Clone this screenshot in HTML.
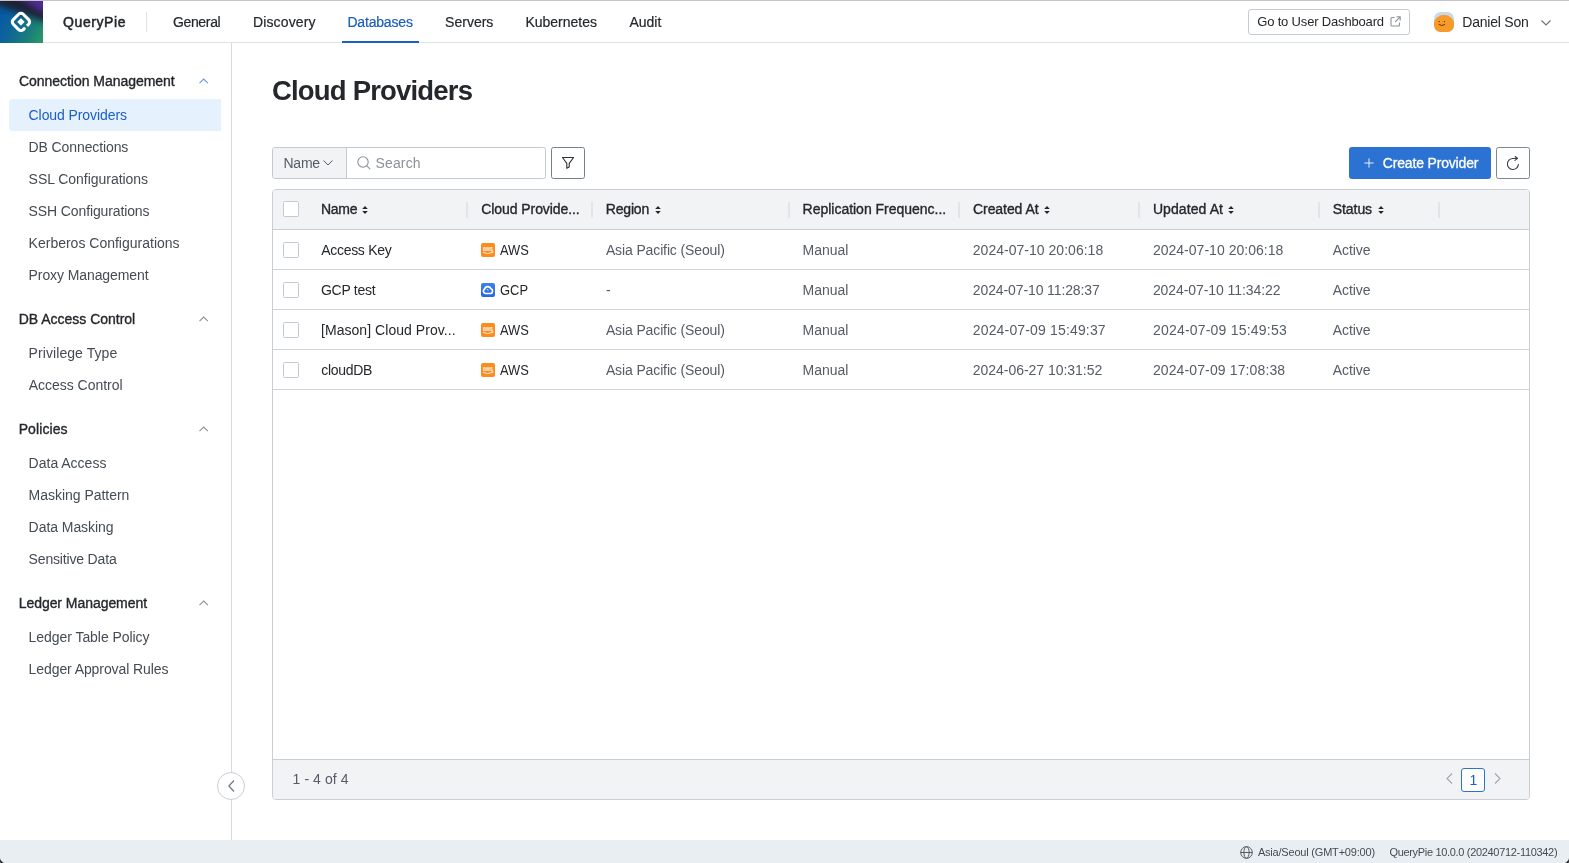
<!DOCTYPE html>
<html lang="en"><head><meta charset="utf-8"><title>Cloud Providers - QueryPie</title>
<style>
*{box-sizing:border-box;margin:0;padding:0}
html,body{width:1569px;height:863px;overflow:hidden;background:#fff}
body{font-family:"Liberation Sans",sans-serif;position:relative;color:#24272b}
.a{position:absolute}
.t{position:absolute;white-space:nowrap;display:block}
.t.sh,.t.th{-webkit-text-stroke:0.35px currentColor}
.t.cp{-webkit-text-stroke:0.3px #fff}
.t.qp{-webkit-text-stroke:0.5px currentColor}
.t.nv{-webkit-text-stroke:0.2px currentColor}
#texts{position:absolute;left:0;top:0;width:1569px;height:863px;will-change:transform}
svg{position:absolute;overflow:visible}
#topline{left:0;top:0;width:1569px;height:1px;background:#c4c4c4}
#hdr{left:0;top:1px;width:1569px;height:42px;border-bottom:1px solid #dde3e9;background:#fff}
#logo{left:0;top:1px;width:43px;height:42px;overflow:hidden;background:#0b5c9c}
#hdiv{left:146px;top:12px;width:1px;height:20px;background:#dfe3e8}
#navul{left:342px;top:41px;width:77px;height:2px;background:#1b5fc4}
#dashbtn{left:1248px;top:9px;width:162px;height:26px;border:1px solid #c5cad3;border-radius:3px;background:#fff}
#side{left:0;top:43px;width:232px;height:797px;border-right:1px solid #d8dce2;background:#fff}
#sel{left:9px;top:99px;width:212px;height:32px;background:#e5f1fd;border-radius:4px 0 0 4px}
#colbtn{left:217px;top:772px;width:28px;height:28px;border-radius:50%;border:1px solid #c9ced4;background:#fff}
#foot{left:0;top:840px;width:1569px;height:23px;background:#e9eef2}
#sgrp{left:272px;top:147px;width:274px;height:32px;border:1px solid #c5cad0;border-radius:2.500px;background:#fff;overflow:hidden}
#sname{left:0;top:0;width:74px;height:30px;background:#f1f3f5;border-right:1px solid #c5cad0}
#fbtn{left:551px;top:147px;width:34px;height:32px;border:1px solid #77818b;border-radius:2.500px;background:#fff}
#cbtn{left:1349px;top:147px;width:142px;height:32px;border-radius:3px;background:#2b72d2}
#rbtn{left:1496px;top:147px;width:34px;height:32px;border:1px solid #7f8891;border-radius:2.500px;background:#fff}
#tbl{left:272px;top:189px;width:1258px;height:611px;border:1px solid #c9ced4;border-radius:4px;background:#fff;overflow:hidden}
#thead{left:0;top:0;width:1256px;height:40px;background:#f1f3f5;border-bottom:1px solid #c9ced4}
.rl{left:0;width:1256px;height:1px;background:#d0d4da}
#tfoot{left:0;top:569px;width:1256px;height:40px;background:#f1f3f5;border-top:1px solid #c9ced4}
.cb{width:16px;height:16px;border:1px solid #c6c9d1;border-radius:1.500px;background:#fff;left:283px}
.cd{width:2px;height:16px;background:#e1e4e8;top:202px}
.ic{width:14px;height:14px;border-radius:2.5px;left:481px}
.aws{background:#f68d2a}
.gcp{background:#3b7eee}
#pg{left:1461px;top:768px;width:24px;height:24px;border:1px solid #2b72d2;border-radius:3px;background:#fff}

</style></head>
<body>
<div class="a" id="hdr"></div>
<div class="a" id="topline"></div>
<div class="a" id="logo">
<svg width="43" height="42" viewBox="0 0 43 42" style="left:0;top:0">
<defs>
<linearGradient id="lgb" x1="0" y1="0.35" x2="1" y2="0.85"><stop offset="0" stop-color="#0759a3"/><stop offset="0.3" stop-color="#0d6499"/><stop offset="0.5" stop-color="#146f8b"/><stop offset="0.75" stop-color="#1c8078"/><stop offset="1" stop-color="#279768"/></linearGradient>
<filter id="lbl" x="-50%" y="-50%" width="200%" height="200%"><feGaussianBlur stdDeviation="3.6"/></filter>
<filter id="lbl2" x="-50%" y="-50%" width="200%" height="200%"><feGaussianBlur stdDeviation="3"/></filter>
</defs>
<rect width="43" height="42" fill="url(#lgb)"/>
<g filter="url(#lbl)">
<polygon points="-12,-12 60,-12 60,26 34,17 -12,1" fill="#1b2036"/>
</g>
<g filter="url(#lbl2)">
<polygon points="10,-9 56,-9 56,15 38,9 " fill="#502a92"/>
</g>
<g transform="translate(20.950,20.900) rotate(45)">
<path d="M 7.050 -1.500 L 7.050 -3.750 A 3.300 3.300 0 0 0 3.750 -7.050 L -3.750 -7.050 A 3.300 3.300 0 0 0 -7.050 -3.750 L -7.050 3.750 A 3.300 3.300 0 0 0 -3.750 7.050 L 3.750 7.050 A 3.300 3.300 0 0 0 7.050 3.750 L 7.050 2.400" fill="none" stroke="#fff" stroke-width="3.100"/>
<circle cx="7.050" cy="2.400" r="1.550" fill="#fff"/>
<rect x="-2.650" y="-2.650" width="5.300" height="5.300" rx="0.500" fill="#fff"/>
</g>
</svg>
</div>
<div class="a" id="hdiv"></div>
<div class="a" id="navul"></div>
<div class="a" id="dashbtn"></div>
<svg width="11" height="11" viewBox="0 0 11 11" style="left:1390px;top:16px" fill="none" stroke="#8a919a" stroke-width="1.1">
<path d="M4.5 1.5 H2 A1 1 0 0 0 1 2.5 V9 A1 1 0 0 0 2 10 H8.5 A1 1 0 0 0 9.5 9 V6.5"/>
<path d="M6.5 0.8 H10.2 V4.5 M10.2 0.8 L5.2 5.8"/>
</svg>
<!-- avatar -->
<svg width="20" height="20" viewBox="0 0 20 20" style="left:1434px;top:12px">
<defs><clipPath id="avc"><rect x="0" y="0" width="20" height="20" rx="6.5"/></clipPath></defs>
<g clip-path="url(#avc)">
<rect width="20" height="20" fill="#c9d9ea"/>
<circle cx="10" cy="13" r="10.3" fill="#f89a28"/>
<circle cx="5.300" cy="9.600" r="0.700" fill="#4a3210"/>
<circle cx="10.400" cy="9.600" r="0.700" fill="#4a3210"/>
<path d="M5 12.600 Q7.850 14.700 10.700 12.600" fill="none" stroke="#4a3210" stroke-width="0.9" stroke-linecap="round"/>
</g>
</svg>
<svg width="10" height="6" viewBox="0 0 10 6" style="left:1541px;top:19.500px" fill="none" stroke="#6a717a" stroke-width="1.1"><path d="M0.5 0.5 L5 5 L9.500 0.5"/></svg>

<div class="a" id="side"></div>
<div class="a" id="sel"></div>
<svg width="10" height="6" viewBox="0 0 10 6" style="left:199px;top:77.6px" fill="none" stroke="#6a9ae2" stroke-width="1.1"><path d="M0.5 5.200 L4.700 1 L8.900 5.200"/></svg>
<svg width="10" height="6" viewBox="0 0 10 6" style="left:199px;top:315.6px" fill="none" stroke="#8a9097" stroke-width="1.1"><path d="M0.5 5.200 L4.700 1 L8.900 5.200"/></svg>
<svg width="10" height="6" viewBox="0 0 10 6" style="left:199px;top:425.6px" fill="none" stroke="#8a9097" stroke-width="1.1"><path d="M0.5 5.200 L4.700 1 L8.900 5.200"/></svg>
<svg width="10" height="6" viewBox="0 0 10 6" style="left:199px;top:599.6px" fill="none" stroke="#8a9097" stroke-width="1.1"><path d="M0.5 5.200 L4.700 1 L8.900 5.200"/></svg>
<div class="a" id="colbtn"></div>
<svg width="7" height="12" viewBox="0 0 7 12" style="left:227.500px;top:780px" fill="none" stroke="#6a717a" stroke-width="1.1"><path d="M6 0.5 L0.8 6 L6 11.5"/></svg>

<!-- toolbar -->
<div class="a" id="sgrp"><div class="a" id="sname"></div></div>
<svg width="10" height="6" viewBox="0 0 10 6" style="left:323px;top:159.700px" fill="none" stroke="#555c66" stroke-width="1"><path d="M0.5 0.5 L5 5 L9.500 0.5"/></svg>
<svg width="14" height="14" viewBox="0 0 14 14" style="left:357px;top:156px" fill="none" stroke="#8a919a" stroke-width="1.1"><circle cx="6" cy="6" r="5.2"/><path d="M9.800 9.800 L13.200 13.200"/></svg>
<div class="a" id="fbtn"></div>
<svg width="14" height="14" viewBox="0 0 14 14" style="left:561px;top:156px" fill="none" stroke="#2b3036" stroke-width="1.1" stroke-linejoin="round"><path d="M1.500 1.500 H12.600 L8.200 7.400 V11.100 L5.800 12.300 V7.400 Z"/></svg>
<div class="a" id="cbtn"></div>
<svg width="10" height="10" viewBox="0 0 10 10" style="left:1364.200px;top:158px" fill="none" stroke="#fff" stroke-opacity="0.9" stroke-width="1"><path d="M5 0.4 V9.600 M0.4 5 H9.600"/></svg>
<div class="a" id="rbtn"></div>
<svg width="14" height="15" viewBox="0 0 14 15" style="left:1506px;top:156px" fill="none" stroke="#30353b" stroke-width="1.05" stroke-linecap="round" stroke-linejoin="round"><path d="M12.400 8.400 A5.500 5.500 0 1 1 7.200 2.500 L11.300 2.300"/><path d="M9.200 0.500 L11.500 2.300 L9 4.400"/></svg>

<!-- table -->
<div class="a" id="tbl">
<div class="a" id="thead"></div>
<div class="a rl" style="top:79px"></div>
<div class="a rl" style="top:119px"></div>
<div class="a rl" style="top:159px"></div>
<div class="a rl" style="top:199px"></div>
<div class="a" id="tfoot"></div>
</div>
<div class="a cb" style="top:201px"></div>
<div class="a cb" style="top:242px"></div>
<div class="a cb" style="top:282px"></div>
<div class="a cb" style="top:322px"></div>
<div class="a cb" style="top:362px"></div>
<div class="a cd" style="left:466px"></div>
<div class="a cd" style="left:591px"></div>
<div class="a cd" style="left:788px"></div>
<div class="a cd" style="left:958px"></div>
<div class="a cd" style="left:1138px"></div>
<div class="a cd" style="left:1318px"></div>
<div class="a cd" style="left:1438px"></div>
<!-- sort icons -->
<svg class="so" width="6" height="8" viewBox="0 0 6 8" style="left:362px;top:206px" fill="#24272b"><path d="M3 0 L5.800 3 H0.2 Z M3 8 L5.800 5 H0.2 Z"/></svg>
<svg class="so" width="6" height="8" viewBox="0 0 6 8" style="left:654.500px;top:206px" fill="#24272b"><path d="M3 0 L5.800 3 H0.2 Z M3 8 L5.800 5 H0.2 Z"/></svg>
<svg class="so" width="6" height="8" viewBox="0 0 6 8" style="left:1044px;top:206px" fill="#24272b"><path d="M3 0 L5.800 3 H0.2 Z M3 8 L5.800 5 H0.2 Z"/></svg>
<svg class="so" width="6" height="8" viewBox="0 0 6 8" style="left:1228px;top:206px" fill="#24272b"><path d="M3 0 L5.800 3 H0.2 Z M3 8 L5.800 5 H0.2 Z"/></svg>
<svg class="so" width="6" height="8" viewBox="0 0 6 8" style="left:1378px;top:206px" fill="#24272b"><path d="M3 0 L5.800 3 H0.2 Z M3 8 L5.800 5 H0.2 Z"/></svg>
<!-- provider icons -->
<svg width="14" height="14" viewBox="0 0 14 14" style="left:481px;top:243px"><rect width="14" height="14" rx="2" fill="#fd8c20"/><text x="7.050" y="7.700" text-anchor="middle" font-family="Liberation Sans, sans-serif" font-weight="700" font-size="6.600" fill="#fff" fill-opacity="0.92" textLength="10" lengthAdjust="spacingAndGlyphs">aws</text><path d="M2.100 9.300 Q6.500 11.800 11.400 9.400" fill="none" stroke="#fff" stroke-opacity="0.9" stroke-width="0.9"/><path d="M10.300 8.400 L12.200 8.600 L11.500 10.300" fill="none" stroke="#fff" stroke-opacity="0.85" stroke-width="0.7"/></svg>
<svg width="14" height="14" viewBox="0 0 14 14" style="left:481px;top:283px"><defs><linearGradient id="gg" x1="0" y1="0" x2="0" y2="1"><stop offset="0" stop-color="#3f80ea"/><stop offset="1" stop-color="#2468e6"/></linearGradient></defs><rect width="14" height="14" rx="2" fill="url(#gg)"/><path d="M4.500 10.500 A2.500 2.500 0 0 1 3.600 5.900 A3.400 3.400 0 0 1 10 5.700 A2.500 2.500 0 0 1 9.500 10.500 Z" fill="none" stroke="#fff" stroke-width="1.700" stroke-linejoin="round"/><path d="M5.900 6.500 Q7.300 6.500 7.300 7.500" fill="none" stroke="#fff" stroke-width="1"/></svg>
<svg width="14" height="14" viewBox="0 0 14 14" style="left:481px;top:323px"><rect width="14" height="14" rx="2" fill="#fd8c20"/><text x="7.050" y="7.700" text-anchor="middle" font-family="Liberation Sans, sans-serif" font-weight="700" font-size="6.600" fill="#fff" fill-opacity="0.92" textLength="10" lengthAdjust="spacingAndGlyphs">aws</text><path d="M2.100 9.300 Q6.500 11.800 11.400 9.400" fill="none" stroke="#fff" stroke-opacity="0.9" stroke-width="0.9"/><path d="M10.300 8.400 L12.200 8.600 L11.500 10.300" fill="none" stroke="#fff" stroke-opacity="0.85" stroke-width="0.7"/></svg>
<svg width="14" height="14" viewBox="0 0 14 14" style="left:481px;top:363px"><rect width="14" height="14" rx="2" fill="#fd8c20"/><text x="7.050" y="7.700" text-anchor="middle" font-family="Liberation Sans, sans-serif" font-weight="700" font-size="6.600" fill="#fff" fill-opacity="0.92" textLength="10" lengthAdjust="spacingAndGlyphs">aws</text><path d="M2.100 9.300 Q6.500 11.800 11.400 9.400" fill="none" stroke="#fff" stroke-opacity="0.9" stroke-width="0.9"/><path d="M10.300 8.400 L12.200 8.600 L11.500 10.300" fill="none" stroke="#fff" stroke-opacity="0.85" stroke-width="0.7"/></svg>
<!-- pagination -->
<svg width="7" height="11" viewBox="0 0 7 11" style="left:1445.500px;top:773px" fill="none" stroke="#a0a6ae" stroke-width="1.1"><path d="M6 0.5 L1 5.500 L6 10.500"/></svg>
<div class="a" id="pg"></div>
<svg width="7" height="11" viewBox="0 0 7 11" style="left:1494px;top:773px" fill="none" stroke="#a0a6ae" stroke-width="1.1"><path d="M1 0.5 L6 5.500 L1 10.500"/></svg>
<!-- footer -->
<div class="a" id="foot"></div>
<svg width="13" height="13" viewBox="0 0 13 13" style="left:1239.500px;top:845.500px" fill="none" stroke="#555c66" stroke-width="1"><circle cx="6.500" cy="6.500" r="5.800"/><ellipse cx="6.500" cy="6.500" rx="2.600" ry="5.800"/><path d="M0.7 6.500 H12.300"/></svg>
<svg width="6" height="6" viewBox="0 0 6 6" style="left:0;top:857px"><path d="M0 1.200 Q1 4.700 4 6 L0 6 Z" fill="#000" stroke="#f4f6f8" stroke-width="0.4"/></svg>
<svg width="6" height="6" viewBox="0 0 6 6" style="left:1563px;top:857px"><path d="M6 1.200 Q5 4.700 2 6 L6 6 Z" fill="#000" stroke="#f4f6f8" stroke-width="0.4"/></svg>

<div id="texts">
<span class="t qp" id="t0" style="left:63.1px;top:11.5px;font-size:14px;line-height:20px;color:#24272b;letter-spacing:0.571px;">QueryPie</span>
<span class="t nv" id="t1" style="left:172.9px;top:11.5px;font-size:14px;line-height:20px;color:#24272b;letter-spacing:-0.333px;">General</span>
<span class="t nv" id="t2" style="left:253.0px;top:11.5px;font-size:14px;line-height:20px;color:#24272b;letter-spacing:0.125px;">Discovery</span>
<span class="t nv" id="t3" style="left:347.4px;top:11.5px;font-size:14px;line-height:20px;color:#1a5cc0;letter-spacing:-0.175px;">Databases</span>
<span class="t nv" id="t4" style="left:445.1px;top:11.5px;font-size:14px;line-height:20px;color:#24272b;letter-spacing:-0.000px;">Servers</span>
<span class="t nv" id="t5" style="left:525.4px;top:11.5px;font-size:14px;line-height:20px;color:#24272b;letter-spacing:0.000px;">Kubernetes</span>
<span class="t nv" id="t6" style="left:629.4px;top:11.5px;font-size:14px;line-height:20px;color:#24272b;letter-spacing:-0.000px;">Audit</span>
<span class="t" id="t7" style="left:1257.2px;top:12.5px;font-size:13px;line-height:18px;color:#24272b;letter-spacing:-0.168px;">Go to User Dashboard</span>
<span class="t" id="t8" style="left:1462.3px;top:12.0px;font-size:14px;line-height:20px;color:#24272b;letter-spacing:-0.222px;">Daniel Son</span>
<span class="t sh" id="t9" style="left:18.9px;top:71.0px;font-size:14px;line-height:20px;color:#24272b;letter-spacing:-0.030px;">Connection Management</span>
<span class="t" id="t10" style="left:28.6px;top:105.0px;font-size:14px;line-height:20px;color:#1b5fc4;letter-spacing:-0.086px;">Cloud Providers</span>
<span class="t" id="t11" style="left:28.6px;top:137.0px;font-size:14px;line-height:20px;color:#454b54;letter-spacing:-0.108px;">DB Connections</span>
<span class="t" id="t12" style="left:28.6px;top:169.0px;font-size:14px;line-height:20px;color:#454b54;letter-spacing:-0.035px;">SSL Configurations</span>
<span class="t" id="t13" style="left:28.6px;top:201.0px;font-size:14px;line-height:20px;color:#454b54;letter-spacing:-0.118px;">SSH Configurations</span>
<span class="t" id="t14" style="left:28.6px;top:233.0px;font-size:14px;line-height:20px;color:#454b54;">Kerberos Configurations</span>
<span class="t" id="t15" style="left:28.6px;top:265.0px;font-size:14px;line-height:20px;color:#454b54;letter-spacing:-0.093px;">Proxy Management</span>
<span class="t sh" id="t16" style="left:18.7px;top:309.0px;font-size:14px;line-height:20px;color:#24272b;letter-spacing:-0.013px;">DB Access Control</span>
<span class="t" id="t17" style="left:28.6px;top:343.0px;font-size:14px;line-height:20px;color:#454b54;letter-spacing:0.077px;">Privilege Type</span>
<span class="t" id="t18" style="left:28.8px;top:375.0px;font-size:14px;line-height:20px;color:#454b54;letter-spacing:-0.031px;">Access Control</span>
<span class="t sh" id="t19" style="left:18.7px;top:419.0px;font-size:14px;line-height:20px;color:#24272b;letter-spacing:0.086px;">Policies</span>
<span class="t" id="t20" style="left:28.6px;top:453.0px;font-size:14px;line-height:20px;color:#454b54;">Data Access</span>
<span class="t" id="t21" style="left:28.6px;top:485.0px;font-size:14px;line-height:20px;color:#454b54;letter-spacing:-0.029px;">Masking Pattern</span>
<span class="t" id="t22" style="left:28.6px;top:517.0px;font-size:14px;line-height:20px;color:#454b54;letter-spacing:-0.055px;">Data Masking</span>
<span class="t" id="t23" style="left:28.6px;top:549.0px;font-size:14px;line-height:20px;color:#454b54;letter-spacing:-0.169px;">Sensitive Data</span>
<span class="t sh" id="t24" style="left:18.7px;top:593.0px;font-size:14px;line-height:20px;color:#24272b;letter-spacing:-0.050px;">Ledger Management</span>
<span class="t" id="t25" style="left:28.6px;top:627.0px;font-size:14px;line-height:20px;color:#454b54;letter-spacing:-0.056px;">Ledger Table Policy</span>
<span class="t" id="t26" style="left:28.6px;top:659.0px;font-size:14px;line-height:20px;color:#454b54;letter-spacing:-0.090px;">Ledger Approval Rules</span>
<span class="t" id="t27" style="left:272.0px;top:71.5px;font-size:27.5px;line-height:38px;color:#24272b;font-weight:700;letter-spacing:-0.814px;">Cloud Providers</span>
<span class="t" id="t28" style="left:283.4px;top:153.0px;font-size:14px;line-height:20px;color:#555c66;letter-spacing:-0.200px;">Name</span>
<span class="t" id="t29" style="left:375.6px;top:153.0px;font-size:14px;line-height:20px;color:#8a919a;letter-spacing:0.120px;">Search</span>
<span class="t cp" id="t30" style="left:1382.8px;top:153.0px;font-size:14px;line-height:20px;color:#ffffff;letter-spacing:-0.171px;">Create Provider</span>
<span class="t th" id="t31" style="left:321.0px;top:199.3px;font-size:14px;line-height:20px;color:#24272b;letter-spacing:-0.267px;">Name</span>
<span class="t th" id="t32" style="left:481.3px;top:199.3px;font-size:14px;line-height:20px;color:#24272b;letter-spacing:-0.080px;">Cloud Provide...</span>
<span class="t th" id="t33" style="left:605.7px;top:199.3px;font-size:14px;line-height:20px;color:#24272b;letter-spacing:-0.160px;">Region</span>
<span class="t th" id="t34" style="left:802.6px;top:199.3px;font-size:14px;line-height:20px;color:#24272b;letter-spacing:-0.018px;">Replication Frequenc...</span>
<span class="t th" id="t35" style="left:973.0px;top:199.3px;font-size:14px;line-height:20px;color:#24272b;letter-spacing:-0.067px;">Created At</span>
<span class="t th" id="t36" style="left:1152.9px;top:199.3px;font-size:14px;line-height:20px;color:#24272b;letter-spacing:0.089px;">Updated At</span>
<span class="t th" id="t37" style="left:1332.8px;top:199.3px;font-size:14px;line-height:20px;color:#24272b;letter-spacing:-0.080px;">Status</span>
<span class="t" id="t38" style="left:321.2px;top:240.0px;font-size:14px;line-height:20px;color:#24272b;letter-spacing:-0.289px;">Access Key</span>
<span class="t sx" id="t39" style="left:500.2px;top:240.0px;font-size:14px;line-height:20px;color:#24272b;transform:scaleX(0.919);transform-origin:0 0;">AWS</span>
<span class="t" id="t40" style="left:605.9px;top:240.0px;font-size:14px;line-height:20px;color:#555c66;letter-spacing:-0.126px;">Asia Pacific (Seoul)</span>
<span class="t" id="t41" style="left:802.6px;top:240.0px;font-size:14px;line-height:20px;color:#555c66;letter-spacing:-0.040px;">Manual</span>
<span class="t" id="t42" style="left:972.8px;top:240.0px;font-size:14px;line-height:20px;color:#555c66;letter-spacing:0.022px;">2024-07-10 20:06:18</span>
<span class="t" id="t43" style="left:1152.9px;top:240.0px;font-size:14px;line-height:20px;color:#555c66;letter-spacing:0.022px;">2024-07-10 20:06:18</span>
<span class="t" id="t44" style="left:1332.8px;top:240.0px;font-size:14px;line-height:20px;color:#555c66;letter-spacing:-0.080px;">Active</span>
<span class="t" id="t45" style="left:321.0px;top:280.0px;font-size:14px;line-height:20px;color:#24272b;letter-spacing:-0.286px;">GCP test</span>
<span class="t sx" id="t46" style="left:500.1px;top:280.0px;font-size:14px;line-height:20px;color:#24272b;transform:scaleX(0.924);transform-origin:0 0;">GCP</span>
<span class="t" id="t47" style="left:605.9px;top:280.0px;font-size:14px;line-height:20px;color:#555c66;">-</span>
<span class="t" id="t48" style="left:802.6px;top:280.0px;font-size:14px;line-height:20px;color:#555c66;letter-spacing:-0.040px;">Manual</span>
<span class="t" id="t49" style="left:972.8px;top:280.0px;font-size:14px;line-height:20px;color:#555c66;letter-spacing:-0.111px;">2024-07-10 11:28:37</span>
<span class="t" id="t50" style="left:1152.9px;top:280.0px;font-size:14px;line-height:20px;color:#555c66;letter-spacing:-0.078px;">2024-07-10 11:34:22</span>
<span class="t" id="t51" style="left:1332.8px;top:280.0px;font-size:14px;line-height:20px;color:#555c66;letter-spacing:-0.080px;">Active</span>
<span class="t" id="t52" style="left:321.0px;top:320.0px;font-size:14px;line-height:20px;color:#24272b;letter-spacing:0.050px;">[Mason] Cloud Prov...</span>
<span class="t sx" id="t53" style="left:500.2px;top:320.0px;font-size:14px;line-height:20px;color:#24272b;transform:scaleX(0.919);transform-origin:0 0;">AWS</span>
<span class="t" id="t54" style="left:605.9px;top:320.0px;font-size:14px;line-height:20px;color:#555c66;letter-spacing:-0.126px;">Asia Pacific (Seoul)</span>
<span class="t" id="t55" style="left:802.6px;top:320.0px;font-size:14px;line-height:20px;color:#555c66;letter-spacing:-0.040px;">Manual</span>
<span class="t" id="t56" style="left:972.8px;top:320.0px;font-size:14px;line-height:20px;color:#555c66;letter-spacing:0.156px;">2024-07-09 15:49:37</span>
<span class="t" id="t57" style="left:1152.9px;top:320.0px;font-size:14px;line-height:20px;color:#555c66;letter-spacing:0.211px;">2024-07-09 15:49:53</span>
<span class="t" id="t58" style="left:1332.8px;top:320.0px;font-size:14px;line-height:20px;color:#555c66;letter-spacing:-0.080px;">Active</span>
<span class="t" id="t59" style="left:321.2px;top:360.0px;font-size:14px;line-height:20px;color:#24272b;letter-spacing:-0.300px;">cloudDB</span>
<span class="t sx" id="t60" style="left:500.2px;top:360.0px;font-size:14px;line-height:20px;color:#24272b;transform:scaleX(0.919);transform-origin:0 0;">AWS</span>
<span class="t" id="t61" style="left:605.9px;top:360.0px;font-size:14px;line-height:20px;color:#555c66;letter-spacing:-0.126px;">Asia Pacific (Seoul)</span>
<span class="t" id="t62" style="left:802.6px;top:360.0px;font-size:14px;line-height:20px;color:#555c66;letter-spacing:-0.040px;">Manual</span>
<span class="t" id="t63" style="left:972.8px;top:360.0px;font-size:14px;line-height:20px;color:#555c66;letter-spacing:-0.033px;">2024-06-27 10:31:52</span>
<span class="t" id="t64" style="left:1152.9px;top:360.0px;font-size:14px;line-height:20px;color:#555c66;letter-spacing:0.122px;">2024-07-09 17:08:38</span>
<span class="t" id="t65" style="left:1332.8px;top:360.0px;font-size:14px;line-height:20px;color:#555c66;letter-spacing:-0.080px;">Active</span>
<span class="t" id="t66" style="left:292.6px;top:769.0px;font-size:14px;line-height:20px;color:#555c66;letter-spacing:0.067px;">1 - 4 of 4</span>
<span class="t" id="t67" style="left:1469.6px;top:769.5px;font-size:14px;line-height:20px;color:#1b5fc4;">1</span>
<span class="t" id="t68" style="left:1257.9px;top:844.5px;font-size:11px;line-height:15px;color:#454b54;letter-spacing:-0.200px;">Asia/Seoul (GMT+09:00)</span>
<span class="t" id="t69" style="left:1389.4px;top:844.5px;font-size:11px;line-height:15px;color:#454b54;letter-spacing:-0.319px;">QueryPie 10.0.0 (20240712-110342)</span>
</div>
</body></html>
